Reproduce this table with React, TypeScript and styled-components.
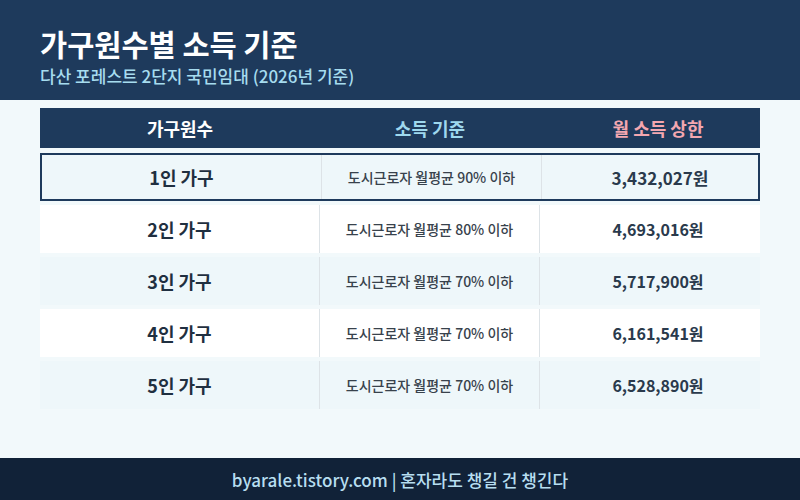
import * as React from "react";
import styled, { createGlobalStyle } from "styled-components";

const GlobalStyle = createGlobalStyle`
  html, body {
    margin: 0;
    padding: 0;
  }
  body {
    font-family: "Noto Sans CJK KR", "Noto Sans", sans-serif;
    background: #f2f9fb;
  }
`

const Page = styled.div`
  width: 800px;
  height: 500px;
  display: flex;
  flex-direction: column;
  background: #f2f9fb;
  overflow: hidden;
`

const Header = styled.header`
  height: 100px;
  box-sizing: border-box;
  background: #1e3a5c;
  padding: 24px 40px 0;
`

const Title = styled.h1`
  margin: 0;
  font-size: 29.5px;
  line-height: 38px;
  font-weight: 700;
  color: #ffffff;
`

const Subtitle = styled.div`
  margin-top: 2px;
  font-size: 17px;
  line-height: 24px;
  font-weight: 500;
  color: #a6dcef;
`

const Table = styled.div`
  margin: 8px 40px 0;
  display: flex;
  flex-direction: column;
  gap: 4px;
  flex: 1;
`

const HeadRow = styled.div`
  display: grid;
  grid-template-columns: 280px 220px 220px;
  height: 40px;
  background: #1e3a5c;
  margin-bottom: 1px;
`

const HeadCell = styled.div`
  display: flex;
  align-items: center;
  justify-content: center;
  padding-left: ${({ $shift }) => ($shift ? "16px" : "0")};
  font-size: 18px;
  font-weight: 700;
  color: ${({ $tone }) => $tone};
`

const Row = styled.div`
  display: grid;
  grid-template-columns: 280px 220px 220px;
  height: 48px;
  box-sizing: border-box;
  background: ${({ $shade }) => ($shade ? "#eef7fa" : "#ffffff")};
  border: ${({ $active }) => ($active ? "2px solid #1e3a5c" : "none")};
`

const Cell = styled.div`
  display: flex;
  align-items: center;
  justify-content: center;
  padding-left: ${({ $shift }) => ($shift ? "16px" : "0")};
  &:not(:last-child) {
    border-right: 1px solid #dde3e7;
  }
`

const Household = styled.span`
  font-size: 18px;
  font-weight: 700;
  color: #1f2f40;
`

const Rule = styled.span`
  font-size: 14px;
  font-weight: 500;
  color: #38424c;
`

const Amount = styled.span`
  font-size: ${({ $active }) => ($active ? "17px" : "16px")};
  font-weight: 700;
  color: #2a3a4c;
`

const Footer = styled.footer`
  height: 42px;
  background: #112238;
  display: flex;
  align-items: center;
  justify-content: center;
  font-size: 17px;
  font-weight: 500;
  color: #b7def0;
`

const rows = [
  { size: "1인 가구", rule: "도시근로자 월평균 90% 이하", amount: "3,432,027원" },
  { size: "2인 가구", rule: "도시근로자 월평균 80% 이하", amount: "4,693,016원" },
  { size: "3인 가구", rule: "도시근로자 월평균 70% 이하", amount: "5,717,900원" },
  { size: "4인 가구", rule: "도시근로자 월평균 70% 이하", amount: "6,161,541원" },
  { size: "5인 가구", rule: "도시근로자 월평균 70% 이하", amount: "6,528,890원" },
]

const App = () => {
  return (
    <>
      <GlobalStyle />
      <Page>
        <Header>
          <Title>가구원수별 소득 기준</Title>
          <Subtitle>다산 포레스트 2단지 국민임대 (2026년 기준)</Subtitle>
        </Header>
        <Table>
          <HeadRow>
            <HeadCell $tone="#ffffff">가구원수</HeadCell>
            <HeadCell $tone="#9ed8ee">소득 기준</HeadCell>
            <HeadCell $tone="#f4a7b0" $shift>월 소득 상한</HeadCell>
          </HeadRow>
          {rows.map((r, i) => (
            <Row key={r.size} $shade={i % 2 === 0} $active={i === 0}>
              <Cell><Household>{r.size}</Household></Cell>
              <Cell><Rule>{r.rule}</Rule></Cell>
              <Cell $shift><Amount $active={i === 0}>{r.amount}</Amount></Cell>
            </Row>
          ))}
        </Table>
        <Footer>byarale.tistory.com | 혼자라도 챙길 건 챙긴다</Footer>
      </Page>
    </>
  )
}

export default App
